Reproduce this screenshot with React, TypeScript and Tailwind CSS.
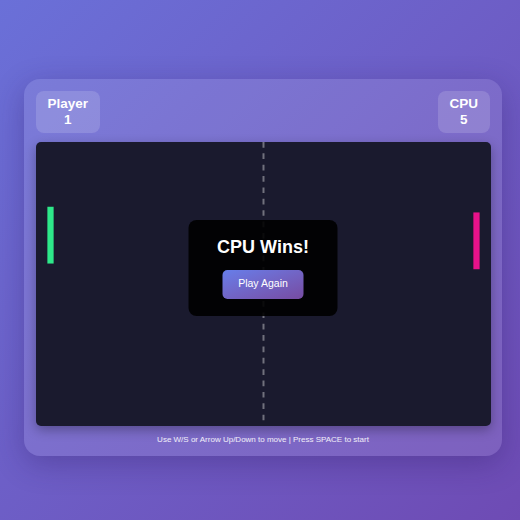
import React from "react";

const FONT = { fontFamily: '"Liberation Sans", Arial, sans-serif' };

function ScoreBox({ label, score }: { label: string; score: number }) {
    return (
        <div className="rounded-lg bg-white/15 px-[11.5px] py-[5px] text-center text-[13.5px] font-bold leading-[16px] text-white">
            <div>{label}</div>
            <div>{score}</div>
        </div>
    );
}

function Field() {
    // game canvas, 800x500 logical units
    return (
        <svg viewBox="0 0 800 500" preserveAspectRatio="none" className="block h-full w-full">
            <line x1="400" y1="0" x2="400" y2="500" stroke="rgba(255,255,255,0.38)" strokeWidth="3.5" strokeDasharray="10 10" />
            <rect x="20" y="114" width="11" height="100" fill="#2ee88a" />
            <rect x="769" y="124" width="11" height="100" fill="#e8128a" />
        </svg>
    );
}

export default function App() {
    return (
        <div className="h-[520px] w-[520px] bg-gradient-to-br from-[#6a70d8] to-[#6e4bb4] pl-[24px] pt-[79px]" style={FONT}>
            <div className="relative w-[478px] rounded-2xl bg-white/10 px-3 pt-3 pb-[10px] shadow-[0_8px_30px_rgba(40,20,90,0.3)]">
                {/* Scores */}
                <div className="flex items-start justify-between pr-[0.5px]">
                    <ScoreBox label="Player" score={1} />
                    <ScoreBox label="CPU" score={5} />
                </div>

                {/* Canvas */}
                <div className="mt-[9px] h-[284px] w-[455px] overflow-hidden rounded-[5px] bg-[#1a1a2e] shadow-[0_4px_12px_rgba(0,0,0,0.3)]">
                    <Field />
                </div>

                <p className="mt-[8px] text-center text-[8px] leading-[12px] text-white/90">
                    Use W/S or Arrow Up/Down to move | Press SPACE to start
                </p>

                {/* Game over overlay */}
                <div className="absolute left-1/2 top-1/2 flex w-[149px] -translate-x-1/2 -translate-y-1/2 flex-col items-center rounded-lg bg-black/90 pt-[16px] pb-[17px]">
                    <h2 className="text-[18px] font-bold leading-[22px] text-white">CPU Wins!</h2>
                    <button className="mt-[12px] h-[29px] w-[81px] rounded-[5px] bg-gradient-to-br from-[#667eea] to-[#764ba2] text-[10.5px] text-white">
                        Play Again
                    </button>
                </div>
            </div>
        </div>
    );
}
